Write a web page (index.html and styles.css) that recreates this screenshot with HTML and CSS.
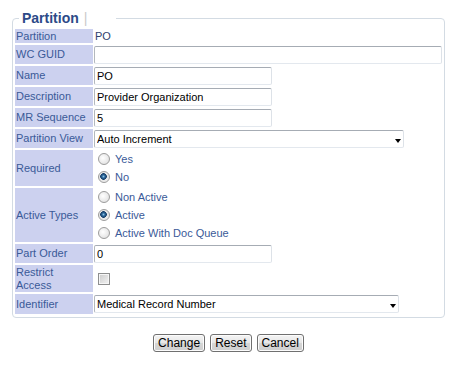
FILE: index.html
```html
<!DOCTYPE html>
<html lang="en">

<head>
    <meta charset="UTF-8">
    <title>Partition</title>
    <link rel="stylesheet" href="styles.css">
</head>

<body>
    <div class="page">
        <fieldset class="panel">
            <legend class="panel-title">Partition<span class="title-sep">|</span></legend>
            <table class="form-table">
                <tr class="row-text">
                    <td class="lbl">Partition</td>
                    <td class="val val-static">PO</td>
                </tr>
                <tr>
                    <td class="lbl">WC GUID</td>
                    <td class="val"><input type="text" class="txt txt-full" value=""></td>
                </tr>
                <tr>
                    <td class="lbl">Name</td>
                    <td class="val"><input type="text" class="txt" value="PO"></td>
                </tr>
                <tr>
                    <td class="lbl">Description</td>
                    <td class="val"><input type="text" class="txt" value="Provider Organization"></td>
                </tr>
                <tr>
                    <td class="lbl">MR Sequence</td>
                    <td class="val"><input type="text" class="txt" value="5"></td>
                </tr>
                <tr>
                    <td class="lbl">Partition View</td>
                    <td class="val">
                        <span class="sel-wrap sel-view">
                            <select class="sel">
                                <option>Auto Increment</option>
                            </select>
                        </span>
                    </td>
                </tr>
                <tr>
                    <td class="lbl">Required</td>
                    <td class="val">
                        <div class="radio-group">
                            <label class="opt"><input type="radio" name="req"> Yes</label>
                            <label class="opt"><input type="radio" name="req" checked> No</label>
                        </div>
                    </td>
                </tr>
                <tr>
                    <td class="lbl">Active Types</td>
                    <td class="val">
                        <div class="radio-group">
                            <label class="opt"><input type="radio" name="act"> Non Active</label>
                            <label class="opt"><input type="radio" name="act" checked> Active</label>
                            <label class="opt"><input type="radio" name="act"> Active With Doc Queue</label>
                        </div>
                    </td>
                </tr>
                <tr>
                    <td class="lbl">Part Order</td>
                    <td class="val"><input type="text" class="txt" value="0"></td>
                </tr>
                <tr class="row-restrict">
                    <td class="lbl">Restrict<br>Access</td>
                    <td class="val"><input type="checkbox" class="chk"></td>
                </tr>
                <tr class="row-last">
                    <td class="lbl">Identifier</td>
                    <td class="val">
                        <span class="sel-wrap sel-ident">
                            <select class="sel">
                                <option>Medical Record Number</option>
                            </select>
                        </span>
                    </td>
                </tr>
            </table>
        </fieldset>

        <div class="actions">
            <button type="button" class="btn">Change</button>
            <button type="button" class="btn">Reset</button>
            <button type="button" class="btn">Cancel</button>
        </div>
    </div>
</body>

</html>
```

FILE: styles.css
```css
* {
    font-family: "Liberation Sans", Arial, sans-serif;
    box-sizing: border-box;
}

body {
    margin: 0;
    background: #ffffff;
}

.page {
    width: 433px;
    margin: 10px 0 0 12px;
}

.panel {
    margin: 0;
    padding: 1px 1px 1px 1px;
    border: 1px solid #d3dbe3;
    border-radius: 4px;
}

.panel-title {
    margin-left: 5px;
    padding: 0 3px;
    font-size: 14px;
    line-height: 16px;
    font-weight: bold;
    color: #2c4a88;
}

.title-sep {
    margin: 0 26px 0 5px;
    font-weight: normal;
    color: #c9c9c9;
}

.form-table {
    width: 100%;
    border-spacing: 1px 2px;
    font-size: 11px;
}

.form-table td {
    padding: 0;
    vertical-align: middle;
}

.lbl {
    width: 78px;
    height: 19px;
    padding-left: 1px !important;
    background: #ccd1ef;
    color: #3a5a98;
    line-height: 13px;
}

.row-text .lbl {
    height: 14px;
}

.row-restrict .lbl {
    height: 27px;
}

.row-last .lbl {
    height: 20px;
}

.val-static {
    padding-left: 1px !important;
    color: #2f3f6e;
}

.txt {
    display: block;
    width: 178px;
    height: 18px;
    margin: 0;
    padding: 0 2px;
    border: 1px solid;
    border-color: #a6acb4 #dde2e8 #e3e8ee #b3b8bd;
    border-radius: 2px;
    font-size: 11px;
    color: #000000;
    outline: none;
}

.txt-full {
    width: 100%;
}

.sel-wrap {
    position: relative;
    display: block;
}

.sel-view {
    width: 310px;
}

.sel-ident {
    width: 305px;
}

.sel-wrap::after {
    content: "";
    position: absolute;
    right: 3px;
    top: 9px;
    border-left: 3.5px solid transparent;
    border-right: 3.5px solid transparent;
    border-top: 4px solid #000000;
    pointer-events: none;
}

.sel {
    display: block;
    width: 100%;
    height: 18px;
    margin: 0;
    padding: 0 2px;
    border: 1px solid;
    border-color: #a6acb4 #dde2e8 #e3e8ee #b3b8bd;
    border-radius: 2px;
    background: #ffffff;
    font-size: 11px;
    color: #000000;
    appearance: none;
    -webkit-appearance: none;
    outline: none;
}

.radio-group {
    display: flex;
    flex-direction: column;
}

.opt {
    display: flex;
    align-items: center;
    height: 18px;
    color: #3a5a98;
}

.opt input {
    appearance: none;
    -webkit-appearance: none;
    width: 12px;
    height: 12px;
    margin: 0 5px 0 4px;
    border: 1px solid #9c9c9c;
    border-radius: 50%;
    background: radial-gradient(circle at 40% 40%, #ffffff, #dadada);
}

.opt input:checked {
    background: radial-gradient(circle at 45% 45%, #8cc2e6 0, #2a6496 1.6px, #173e68 3px, #e6e6e6 3.6px, #f5f5f5 100%);
}

.chk {
    appearance: none;
    -webkit-appearance: none;
    display: block;
    width: 12px;
    height: 12px;
    margin: 0 0 0 4px;
    border: 1px solid #8e8f8f;
    background: linear-gradient(135deg, #cbcbcb, #f4f4f4);
    box-shadow: inset 0 0 0 1px #f6f6f6;
}

.actions {
    display: flex;
    justify-content: center;
    gap: 5px;
    margin-top: 16px;
}

.btn {
    height: 18px;
    padding: 0 4px;
    border: 1px solid #707070;
    border-radius: 3px;
    background: linear-gradient(#f4f4f4, #e6e6e6 50%, #d6d6d6 51%, #cfcfcf);
    box-shadow: inset 0 0 0 1px #fcfcfc;
    font-size: 12px;
    line-height: 16px;
    color: #000000;
    cursor: pointer;
}
```
